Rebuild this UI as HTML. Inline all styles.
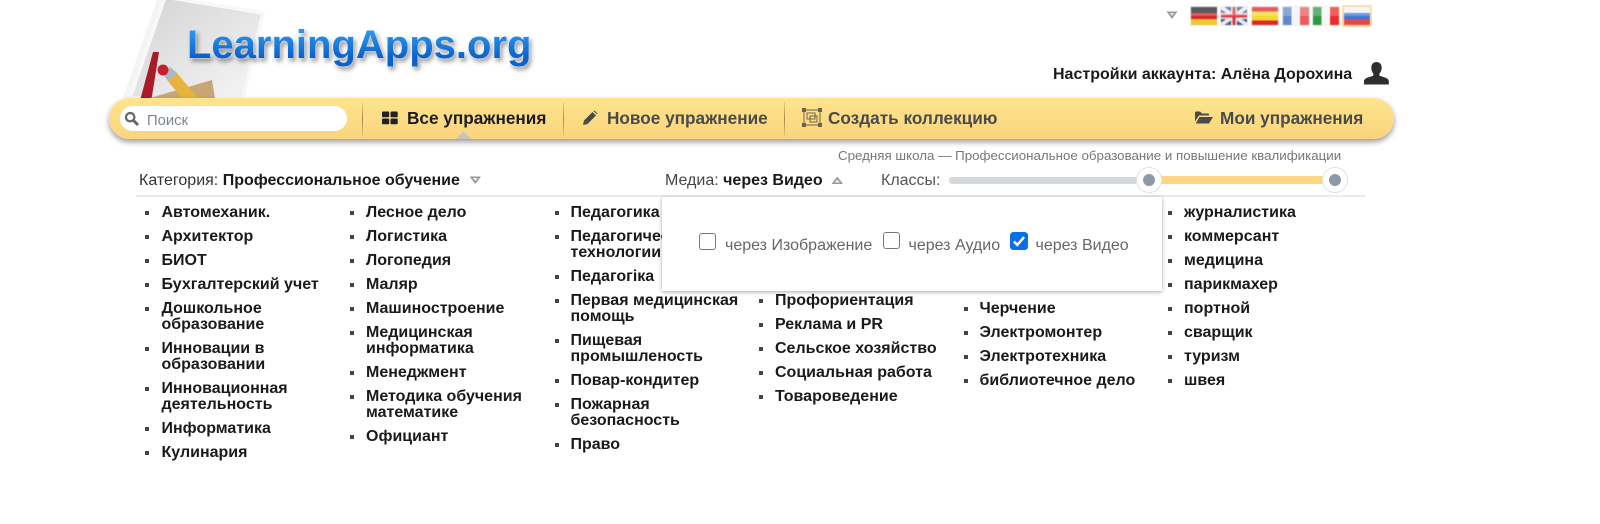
<!DOCTYPE html>
<html lang="ru"><head><meta charset="utf-8"><title>LearningApps.org</title>
<style>
html,body{margin:0;padding:0;background:#fff;width:1600px;height:524px;overflow:hidden}
body{font-family:"Liberation Sans",sans-serif;position:relative;color:#111}
.a{position:absolute;white-space:nowrap}
.it{position:absolute;font-weight:bold;font-size:16px;line-height:16px;color:#1a1a1a;white-space:nowrap;margin-top:1px}
.b{position:absolute;width:4px;height:4px;background:#444;margin-top:1px}
.nav{font-weight:bold;font-size:17.2px;line-height:20px;color:#4a4a4a}
.sep{position:absolute;top:102px;width:1px;height:35px;background:linear-gradient(#eccb7c,#a98a4c,#e8c677)}
.fl{position:absolute;top:7px;width:26px;height:18px;filter:blur(.5px);outline:1px solid #eee}
.fl:after{content:"";position:absolute;left:0;right:0;top:0;height:50%;background:rgba(255,255,255,.25)}
.cb{position:absolute;width:17px;height:17px;border:1.4px solid #777;border-radius:3px;box-sizing:border-box;background:#fff}
.g{color:#666;font-size:16px;line-height:18px}
</style></head><body>

<!-- logo art -->
<svg class="a" style="left:120px;top:0;overflow:visible" width="170" height="98" viewBox="0 0 170 98">
<defs><linearGradient id="p" x1="0" y1="0" x2="1" y2="1"><stop offset="0" stop-color="#d2d2d2"/><stop offset="1" stop-color="#f6f6f6"/></linearGradient></defs>
<polygon points="38,-3 143,13 124,98 3,98" fill="#ececec" opacity=".6"/>
<polygon points="45,-3 143,13 123,98 10,98" fill="url(#p)" stroke="#f8f8f8" stroke-width="3.500"/>
<path d="M33 52 L39 52 L31.700 98 L20.700 98 Z" fill="#a81c28"/>
<polygon points="30,98 92,80 95,98" fill="#c9a676"/>
<polygon points="47,80 56,72 78,98 62,98" fill="#e8b33c"/>
<polygon points="43,74 50,67 57,73 48,81" fill="#aab8c8"/>
<circle cx="43" cy="70" r="5.500" fill="#c4202c"/>
</svg>

<div class="a" style="left:187px;top:21px;font-size:40px;line-height:48px;font-weight:bold;color:transparent;background:linear-gradient(#2a94ec 25%,#0a62cc 75%);-webkit-background-clip:text;background-clip:text;filter:drop-shadow(0 0 1px #fff) drop-shadow(2px 3px 2px rgba(0,0,0,.4))">LearningApps.org</div>

<!-- top right -->
<svg class="a" style="left:1166px;top:11px" width="12" height="9"><polygon points="0.500,0.500 11.500,0.500 6,8" fill="#999"/><polygon points="3.500,2 8.500,2 6,5" fill="#ddd"/></svg>
<div class="fl" style="left:1191px;background:linear-gradient(#222 0 33%,#d8222a 33% 66%,#f0c830 66%)"></div>
<div class="fl" style="left:1221px;overflow:hidden;background:#3a5a98"><svg width="26" height="18" style="display:block"><path d="M0 0L26 18M26 0L0 18" stroke="#f3e6e6" stroke-width="4"/><path d="M13 0V18M0 9H26" stroke="#f3e6e6" stroke-width="6"/><path d="M13 0V18M0 9H26" stroke="#d8343c" stroke-width="3"/></svg></div>
<div class="fl" style="left:1252px;background:linear-gradient(#e0262a 0 25%,#f5d92e 25% 75%,#e0262a 75%)"></div>
<div class="fl" style="left:1283px;background:linear-gradient(90deg,#5f88cc 0 33%,#f4f4f8 33% 66%,#ee5a5a 66%)"></div>
<div class="fl" style="left:1313px;background:linear-gradient(90deg,#2a9a44 0 33%,#f8f8f8 33% 66%,#ee2a2a 66%)"></div>
<div class="a" style="left:1342px;top:5px;width:30px;height:22px;background:#fde2a8"></div>
<div class="fl" style="left:1344px;top:7px;outline:none;background:linear-gradient(#f0f0f6 0 33%,#3a78dc 33% 66%,#e0484c 66%)"></div>

<div class="a" style="left:1053px;top:65px;font-size:16px;line-height:20px;font-weight:bold;color:#1a1a1a">Настройки аккаунта: Алёна Дорохина</div>
<svg class="a" style="left:1364px;top:61px" width="25" height="25" viewBox="0 0 24 24"><path d="M12 1c3.400 0 5 2.500 5 5.500 0 2.500-1 4.500-2.200 5.700v1.800c2.500 1.200 8.500 1.800 9 5v3.500H0v-3.500c.5-3.200 6.500-3.800 9-5v-1.800C8 11 7 9 7 6.500 7 3.500 8.600 1 12 1z" fill="#2e2e2e"/></svg>

<!-- nav bar -->
<div class="a" style="left:109px;top:98px;width:1285px;height:41px;border-radius:21px;background:linear-gradient(#ffe48e,#fad47e);box-shadow:0 3px 6px rgba(0,0,0,.4)"></div>
<div class="a" style="left:120px;top:106px;width:227px;height:25px;border-radius:13px;background:#fff"></div>
<svg class="a" style="left:124px;top:111px" width="16" height="16" viewBox="0 0 16 16"><circle cx="6.200" cy="6.200" r="4.200" fill="none" stroke="#666" stroke-width="2.200"/><path d="M9.500 9.500L14 14" stroke="#666" stroke-width="3"/></svg>
<div class="a" style="left:147px;top:112px;font-size:14.800px;line-height:19px;color:#7d8590">Поиск</div>
<div class="sep" style="left:362px"></div><div class="sep" style="left:563px"></div><div class="sep" style="left:784px"></div>
<svg class="a" style="left:382px;top:111px" width="16" height="14"><rect x="0" y="0.500" width="7.200" height="5.800" rx="1" fill="#222"/><rect x="8.500" y="0.500" width="7.200" height="5.800" rx="1" fill="#222"/><rect x="0" y="7.500" width="7.200" height="5.800" rx="1" fill="#222"/><rect x="8.500" y="7.500" width="7.200" height="5.800" rx="1" fill="#222"/></svg>
<div class="a nav" style="left:407px;top:108px;color:#1c1c22">Все упражнения</div>
<svg class="a" style="left:456px;top:130px" width="15" height="9"><polygon points="0,9 7.500,1 15,9" fill="#c9c4b4"/></svg>
<svg class="a" style="left:582px;top:110px" width="16" height="16" viewBox="0 0 16 16"><path d="M1 15l1-4.500L10.500 2l3.500 3.500L5.500 14z" fill="#4a4a4a"/><path d="M11.500 1l1-.5 3 3-.5 1z" fill="#4a4a4a"/></svg>
<div class="a nav" style="left:607px;top:108px">Новое упражнение</div>
<svg class="a" style="left:802px;top:108px" width="20" height="19" viewBox="0 0 20 19" fill="none" stroke="#6a6550"><rect x="2" y="2" width="16" height="15"/><rect x="5" y="5" width="8" height="6"/><rect x="8" y="8" width="7" height="6"/><g fill="#6a6550" stroke="none"><rect x="0" y="0" width="4" height="4"/><rect x="16" y="0" width="4" height="4"/><rect x="0" y="15" width="4" height="4"/><rect x="16" y="15" width="4" height="4"/></g></svg>
<div class="a nav" style="left:828px;top:108px">Создать коллекцию</div>
<svg class="a" style="left:1195px;top:110px" width="18" height="15" viewBox="0 0 18 14"><path d="M0 2q0-1 1-1h4l2 2h6q1 0 1 1v1H4L0 11z" fill="#4a4a4a"/><path d="M4.500 6.500H18L14 13H0.800z" fill="#4a4a4a"/></svg>
<div class="a nav" style="left:1220px;top:108px">Мои упражнения</div>

<!-- filter row -->
<div class="a" style="left:838px;top:147px;font-size:13.330px;line-height:17px;color:#777">Средняя школа — Профессиональное образование и повышение квалификации</div>
<div class="a" style="left:139px;top:171px;font-size:16px;line-height:20px;color:#333">Категория: <b style="color:#1a1a1a">Профессиональное обучение</b></div>
<svg class="a" style="left:469px;top:176px" width="13" height="9"><polygon points="0.500,0.500 12,0.500 6.300,8" fill="#999"/><polygon points="3.500,2 9,2 6.300,5" fill="#eee"/></svg>
<div class="a" style="left:665px;top:171px;font-size:16px;line-height:20px;color:#444">Медиа: <b style="color:#1a1a1a">через Видео</b></div>
<svg class="a" style="left:831px;top:176px" width="13" height="9"><polygon points="0.500,8 12,8 6.300,0.500" fill="#999"/><polygon points="3.500,6.500 9,6.500 6.300,3.500" fill="#eee"/></svg>
<div class="a" style="left:881px;top:171px;font-size:16px;line-height:20px;color:#555">Классы:</div>
<div class="a" style="left:949px;top:177px;width:190px;height:7px;background:#d3d8dd;border-radius:3px"></div>
<div class="a" style="left:1155px;top:176px;width:175px;height:8px;background:#fdd683"></div>
<div class="a" style="left:1136px;top:167px;width:26px;height:26px;box-sizing:border-box;border-radius:50%;background:#fff;border:1px solid #dfe2e5"></div>
<div class="a" style="left:1143px;top:174px;width:12px;height:12px;border-radius:50%;background:#8d9aa6"></div>
<div class="a" style="left:1322px;top:167px;width:26px;height:26px;box-sizing:border-box;border-radius:50%;background:#fff;border:1px solid #dfe2e5"></div>
<div class="a" style="left:1329px;top:174px;width:12px;height:12px;border-radius:50%;background:#8d9aa6"></div>
<div class="a" style="left:136px;top:195px;width:1230px;height:2px;background:#ececec"></div>

<!-- col 1 -->
<i class="b" style="left:145px;top:210px"></i><div class="it" style="left:161.500px;top:204px">Автомеханик.</div>
<i class="b" style="left:145px;top:234px"></i><div class="it" style="left:161.500px;top:228px">Архитектор</div>
<i class="b" style="left:145px;top:258px"></i><div class="it" style="left:161.500px;top:252px">БИОТ</div>
<i class="b" style="left:145px;top:282px"></i><div class="it" style="left:161.500px;top:276px">Бухгалтерский учет</div>
<i class="b" style="left:145px;top:306px"></i><div class="it" style="left:161.500px;top:300px">Дошкольное<br>образование</div>
<i class="b" style="left:145px;top:346px"></i><div class="it" style="left:161.500px;top:340px">Инновации в<br>образовании</div>
<i class="b" style="left:145px;top:386px"></i><div class="it" style="left:161.500px;top:380px">Инновационная<br>деятельность</div>
<i class="b" style="left:145px;top:426px"></i><div class="it" style="left:161.500px;top:420px">Информатика</div>
<i class="b" style="left:145px;top:450px"></i><div class="it" style="left:161.500px;top:444px">Кулинария</div>
<!-- col 2 -->
<i class="b" style="left:350px;top:210px"></i><div class="it" style="left:366px;top:204px">Лесное дело</div>
<i class="b" style="left:350px;top:234px"></i><div class="it" style="left:366px;top:228px">Логистика</div>
<i class="b" style="left:350px;top:258px"></i><div class="it" style="left:366px;top:252px">Логопедия</div>
<i class="b" style="left:350px;top:282px"></i><div class="it" style="left:366px;top:276px">Маляр</div>
<i class="b" style="left:350px;top:306px"></i><div class="it" style="left:366px;top:300px">Машиностроение</div>
<i class="b" style="left:350px;top:330px"></i><div class="it" style="left:366px;top:324px">Медицинская<br>информатика</div>
<i class="b" style="left:350px;top:370px"></i><div class="it" style="left:366px;top:364px">Менеджмент</div>
<i class="b" style="left:350px;top:394px"></i><div class="it" style="left:366px;top:388px">Методика обучения<br>математике</div>
<i class="b" style="left:350px;top:434px"></i><div class="it" style="left:366px;top:428px">Официант</div>
<!-- col 3 -->
<i class="b" style="left:554.500px;top:210px"></i><div class="it" style="left:570.500px;top:204px">Педагогика</div>
<i class="b" style="left:554.500px;top:234px"></i><div class="it" style="left:570.500px;top:228px">Педагогические<br>технологии</div>
<i class="b" style="left:554.500px;top:274px"></i><div class="it" style="left:570.500px;top:268px">Педагогіка</div>
<i class="b" style="left:554.500px;top:298px"></i><div class="it" style="left:570.500px;top:292px">Первая медицинская<br>помощь</div>
<i class="b" style="left:554.500px;top:338px"></i><div class="it" style="left:570.500px;top:332px">Пищевая<br>промышленость</div>
<i class="b" style="left:554.500px;top:378px"></i><div class="it" style="left:570.500px;top:372px">Повар-кондитер</div>
<i class="b" style="left:554.500px;top:402px"></i><div class="it" style="left:570.500px;top:396px">Пожарная<br>безопасность</div>
<i class="b" style="left:554.500px;top:442px"></i><div class="it" style="left:570.500px;top:436px">Право</div>
<!-- col 4 -->
<i class="b" style="left:759px;top:298px"></i><div class="it" style="left:775px;top:292px">Профориентация</div>
<i class="b" style="left:759px;top:322px"></i><div class="it" style="left:775px;top:316px">Реклама и PR</div>
<i class="b" style="left:759px;top:346px"></i><div class="it" style="left:775px;top:340px">Сельское хозяйство</div>
<i class="b" style="left:759px;top:370px"></i><div class="it" style="left:775px;top:364px">Социальная работа</div>
<i class="b" style="left:759px;top:394px"></i><div class="it" style="left:775px;top:388px">Товароведение</div>
<!-- col 5 -->
<i class="b" style="left:963.500px;top:306px"></i><div class="it" style="left:979.500px;top:300px">Черчение</div>
<i class="b" style="left:963.500px;top:330px"></i><div class="it" style="left:979.500px;top:324px">Электромонтер</div>
<i class="b" style="left:963.500px;top:354px"></i><div class="it" style="left:979.500px;top:348px">Электротехника</div>
<i class="b" style="left:963.500px;top:378px"></i><div class="it" style="left:979.500px;top:372px">библиотечное дело</div>
<!-- col 6 -->
<i class="b" style="left:1168px;top:210px"></i><div class="it" style="left:1184px;top:204px">журналистика</div>
<i class="b" style="left:1168px;top:234px"></i><div class="it" style="left:1184px;top:228px">коммерсант</div>
<i class="b" style="left:1168px;top:258px"></i><div class="it" style="left:1184px;top:252px">медицина</div>
<i class="b" style="left:1168px;top:282px"></i><div class="it" style="left:1184px;top:276px">парикмахер</div>
<i class="b" style="left:1168px;top:306px"></i><div class="it" style="left:1184px;top:300px">портной</div>
<i class="b" style="left:1168px;top:330px"></i><div class="it" style="left:1184px;top:324px">сварщик</div>
<i class="b" style="left:1168px;top:354px"></i><div class="it" style="left:1184px;top:348px">туризм</div>
<i class="b" style="left:1168px;top:378px"></i><div class="it" style="left:1184px;top:372px">швея</div>

<!-- popup -->
<div class="a" style="left:662px;top:197px;width:500px;height:94px;background:#fff;box-shadow:0 1px 4px rgba(0,0,0,.35)"></div>
<div class="cb" style="left:699px;top:233px"></div>
<div class="a g" style="left:725px;top:237px">через Изображение</div>
<div class="cb" style="left:883px;top:232px"></div>
<div class="a g" style="left:908.500px;top:237px">через Аудио</div>
<svg class="a" style="left:1010px;top:232px" width="18" height="18" viewBox="0 0 16 16"><rect width="16" height="16" rx="3" fill="#0b6fe8"/><path d="M3.500 8.500L6.500 11.500L12.500 4.500" fill="none" stroke="#fff" stroke-width="2.200"/></svg>
<div class="a g" style="left:1035.500px;top:237px">через Видео</div>
</body></html>
